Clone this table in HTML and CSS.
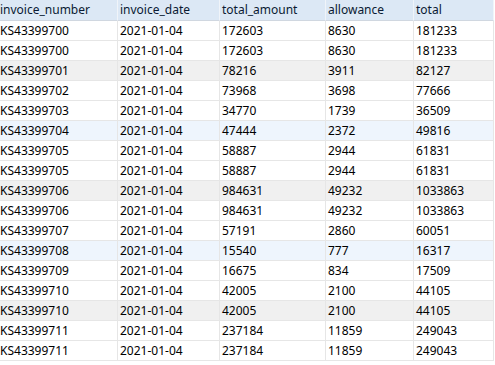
FILE: index.html
```html
<!DOCTYPE html>
<html lang="en">
<head>
    <meta charset="UTF-8">
    <title>Invoices</title>
    <link rel="stylesheet" href="styles.css">
</head>
<body>
    <div class="grid">
        <div class="row head">
            <div class="cell">invoice_number</div>
            <div class="cell">invoice_date</div>
            <div class="cell">total_amount</div>
            <div class="cell">allowance</div>
            <div class="cell">total</div>
        </div>
        <div class="row"><div class="cell">KS43399700</div><div class="cell">2021-01-04</div><div class="cell">172603</div><div class="cell">8630</div><div class="cell">181233</div></div>
        <div class="row"><div class="cell">KS43399700</div><div class="cell">2021-01-04</div><div class="cell">172603</div><div class="cell">8630</div><div class="cell">181233</div></div>
        <div class="row gray"><div class="cell">KS43399701</div><div class="cell">2021-01-04</div><div class="cell">78216</div><div class="cell">3911</div><div class="cell">82127</div></div>
        <div class="row"><div class="cell">KS43399702</div><div class="cell">2021-01-04</div><div class="cell">73968</div><div class="cell">3698</div><div class="cell">77666</div></div>
        <div class="row"><div class="cell">KS43399703</div><div class="cell">2021-01-04</div><div class="cell">34770</div><div class="cell">1739</div><div class="cell">36509</div></div>
        <div class="row blue"><div class="cell">KS43399704</div><div class="cell">2021-01-04</div><div class="cell">47444</div><div class="cell">2372</div><div class="cell">49816</div></div>
        <div class="row"><div class="cell">KS43399705</div><div class="cell">2021-01-04</div><div class="cell">58887</div><div class="cell">2944</div><div class="cell">61831</div></div>
        <div class="row"><div class="cell">KS43399705</div><div class="cell">2021-01-04</div><div class="cell">58887</div><div class="cell">2944</div><div class="cell">61831</div></div>
        <div class="row gray"><div class="cell">KS43399706</div><div class="cell">2021-01-04</div><div class="cell">984631</div><div class="cell">49232</div><div class="cell">1033863</div></div>
        <div class="row"><div class="cell">KS43399706</div><div class="cell">2021-01-04</div><div class="cell">984631</div><div class="cell">49232</div><div class="cell">1033863</div></div>
        <div class="row"><div class="cell">KS43399707</div><div class="cell">2021-01-04</div><div class="cell">57191</div><div class="cell">2860</div><div class="cell">60051</div></div>
        <div class="row blue"><div class="cell">KS43399708</div><div class="cell">2021-01-04</div><div class="cell">15540</div><div class="cell">777</div><div class="cell">16317</div></div>
        <div class="row"><div class="cell">KS43399709</div><div class="cell">2021-01-04</div><div class="cell">16675</div><div class="cell">834</div><div class="cell">17509</div></div>
        <div class="row"><div class="cell">KS43399710</div><div class="cell">2021-01-04</div><div class="cell">42005</div><div class="cell">2100</div><div class="cell">44105</div></div>
        <div class="row gray"><div class="cell">KS43399710</div><div class="cell">2021-01-04</div><div class="cell">42005</div><div class="cell">2100</div><div class="cell">44105</div></div>
        <div class="row"><div class="cell">KS43399711</div><div class="cell">2021-01-04</div><div class="cell">237184</div><div class="cell">11859</div><div class="cell">249043</div></div>
        <div class="row"><div class="cell">KS43399711</div><div class="cell">2021-01-04</div><div class="cell">237184</div><div class="cell">11859</div><div class="cell">249043</div></div>
    </div>
</body>
</html>
```
FILE: styles.css
```css
body {
    margin: 0;
    background-color: #fff;
    font-family: 'Noto Sans', sans-serif;
    font-size: 12px;
    color: #000;
}

.grid {
    display: flex;
    flex-direction: column;
    width: 494px;
}

.row {
    display: grid;
    grid-template-columns: 118px 102px 106px 88px 80px;
    height: 20px;
}

.cell {
    border-right: 1px solid #e6e6e6;
    border-bottom: 1px solid #e6e6e6;
    padding-left: 2px;
    line-height: 19px;
    white-space: nowrap;
    overflow: hidden;
}

.cell:first-child {
    padding-left: 0;
}

.head {
    height: 21px;
    background-color: #dce8f5;
}

.head .cell {
    line-height: 20px;
    color: #0a1a33;
    border-color: #f0f4f9;
    border-bottom-color: #d0d7e0;
}

.gray {
    background-color: #f0f0f0;
}

.blue {
    background-color: #eef5fd;
}
```
